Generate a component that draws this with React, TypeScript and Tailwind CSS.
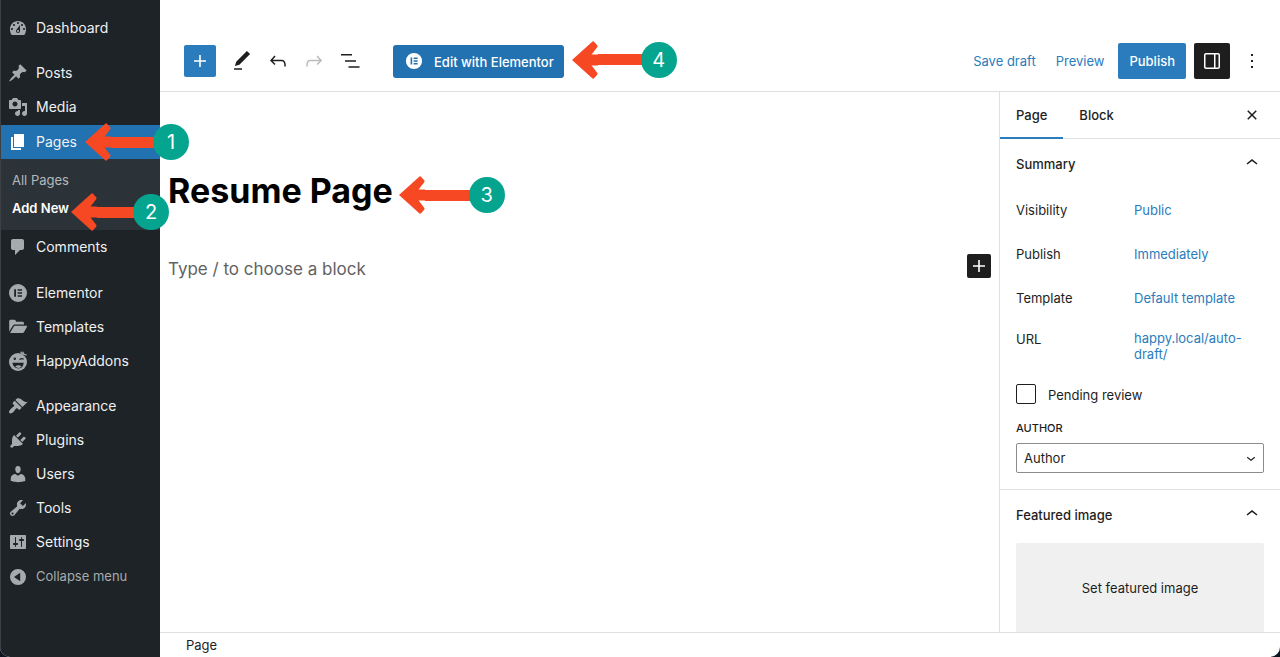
import type { ReactNode } from "react";

type IconProps = { d: string; size?: 18 | 20 | 24; box?: 20 | 24; className?: string };

const sizes = { 18: "size-[18px]", 20: "size-5", 24: "size-6" };

function Icon({ d, size = 24, box = 24, className = "" }: IconProps) {
  return (
    <svg viewBox={`0 0 ${box} ${box}`} className={`${sizes[size]} shrink-0 fill-current ${className}`} aria-hidden="true">
      <path fillRule="evenodd" d={d} />
    </svg>
  );
}

const icons = {
  dashboard:
    "M3.76 17h12.48c1.34-1.63 1.76-3.57 1.76-6 0-4.41-3.58-8-8-8s-8 3.59-8 8c0 2.43.42 4.37 1.76 6zM10 4c.55 0 1 .45 1 1s-.45 1-1 1-1-.45-1-1 .45-1 1-1zM6 6c.55 0 1 .45 1 1s-.45 1-1 1-1-.45-1-1 .45-1 1-1zm8 0c.55 0 1 .45 1 1s-.45 1-1 1-1-.45-1-1 .45-1 1-1zm-5.37 5.55L12 7v6c0 1.1-.9 2-2 2s-2-.9-2-2c0-.57.24-1.08.63-1.45zM4 10c.55 0 1 .45 1 1s-.45 1-1 1-1-.45-1-1 .45-1 1-1zm12 0c.55 0 1 .45 1 1s-.45 1-1 1-1-.45-1-1 .45-1 1-1zm-5 3c0-.55-.45-1-1-1s-1 .45-1 1 .45 1 1 1 1-.45 1-1z",
  posts:
    "M10.44 3.02l1.82-1.82 6.36 6.35-1.83 1.82c-1.05-.68-2.48-.57-3.41.36l-.75.75c-.92.93-1.04 2.35-.35 3.41l-1.83 1.82-2.41-2.41-2.8 2.79c-.42.42-3.38 2.71-3.8 2.29s1.86-3.39 2.28-3.81l2.79-2.79L4.1 9.36l1.83-1.82c1.05.69 2.48.57 3.4-.36l.75-.75c.93-.92 1.05-2.35.36-3.41z",
  media:
    "M13 11V4c0-.55-.45-1-1-1h-1.67L9 1H5L3.67 3H2c-.55 0-1 .45-1 1v7c0 .55.45 1 1 1h10c.55 0 1-.45 1-1zM7 4.5c1.38 0 2.5 1.12 2.5 2.5S8.38 9.5 7 9.5 4.5 8.38 4.5 7 5.62 4.5 7 4.5zM14 6h5v10.5c0 1.38-1.12 2.5-2.5 2.5S14 17.88 14 16.5s1.12-2.5 2.5-2.5c.17 0 .34.02.5.05V9h-3V6zm-4 8.05V13h2v3.5c0 1.38-1.12 2.5-2.5 2.5S7 17.88 7 16.5 8.12 14 9.5 14c.17 0 .34.02.5.05z",
  pages: "M6 15V2h10v13H6zm-1 1h8v2H3V5h2v11z",
  comments: "M5 2h9c1.1 0 2 .9 2 2v7c0 1.1-.9 2-2 2h-2l-5 5v-5H5c-1.1 0-2-.9-2-2V4c0-1.1.9-2 2-2z",
  elementor:
    "M10 1a9 9 0 1 0 0 18a9 9 0 0 0 0-18zM6.2 6.2H8v7.6H6.2zM9.6 6.2h4.4V7.8H9.6zM9.6 9.2h4.4v1.6H9.6zM9.6 12.2h4.4v1.6H9.6z",
  templates:
    "M1.2 14.5V4.2c0-.9.6-1.5 1.5-1.5h3.6c.6 0 1 .3 1.3.8l.6 1.2h6.3c.9 0 1.5.6 1.5 1.5v1.3H7c-1 0-1.700.4-2.200 1.200zM2 16l3.800-6.500c.3-.5.7-.7 1.300-.7h11.300c.6 0 .9.5.6 1l-2.900 5.200c-.4.700-.9 1-1.600 1z",
  appearance:
    "M14.48 11.06L7.41 3.99l1.5-1.5c.5-.56 2.3-.47 3.51.32 1.21.8 1.43 1.28 2.91 2.1 1.18.64 2.45 1.26 4.45.85zm-.71.71L6.7 4.7 4.93 6.47c-.39.39-.39 1.02 0 1.41l1.06 1.06c.39.39.39 1.03 0 1.42-.6.6-1.43 1.11-2.21 1.69-.35.26-.7.53-1.01.84C1.43 14.23.4 16.08 1.4 17.07c.99 1 2.84-.03 4.18-1.36.31-.31.58-.66.85-1.02.57-.78 1.08-1.61 1.69-2.21.39-.39 1.02-.39 1.41 0l1.06 1.06c.39.39 1.02.39 1.41 0z",
  plugins:
    "M13.11 4.36L9.87 7.6 8 5.73l3.24-3.24c.35-.34 1.05-.2 1.56.32.52.51.66 1.21.31 1.55zm-8 1.77l.91-1.12 9.01 9.01-1.19.84c-.71.71-2.63 1.16-3.82 1.16H6.14L4.9 17.26c-.59.59-1.54.59-2.12 0-.59-.58-.59-1.53 0-2.12l1.24-1.24v-3.88c0-1.13.4-3.19 1.09-3.89zm7.26 3.97l3.24-3.24c.34-.35 1.04-.21 1.55.31.52.51.66 1.21.31 1.55l-3.24 3.25z",
  users:
    "M10 9.25c-2.27 0-2.73-3.44-2.73-3.44C7 4.02 7.82 2 9.97 2c2.16 0 2.98 2.02 2.71 3.81 0 0-.41 3.44-2.68 3.44zm0 2.57L12.72 10c2.39 0 4.52 2.33 4.52 4.53v2.49s-3.65 1.13-7.24 1.13c-3.65 0-7.24-1.13-7.24-1.13v-2.49c0-2.25 1.94-4.48 4.47-4.48z",
  tools:
    "M16.68 9.77c-1.34 1.34-3.3 1.67-4.95.99l-5.41 6.52c-.99.99-2.59.99-3.58 0s-.99-2.59 0-3.57l6.52-5.42c-.68-1.65-.35-3.61.99-4.95 1.28-1.28 3.12-1.62 4.72-1.06l-2.89 2.89 2.82 2.82 2.86-2.87c.53 1.58.18 3.39-1.08 4.65zM3.81 16.21c.4.39 1.04.39 1.43 0 .4-.4.4-1.04 0-1.43-.39-.4-1.03-.4-1.43 0-.39.39-.39 1.03 0 1.43z",
  settings:
    "M18 16V4c0-.55-.45-1-1-1H3c-.55 0-1 .45-1 1v12c0 .55.45 1 1 1h14c.55 0 1-.45 1-1zM8 11h1c.55 0 1 .45 1 1s-.45 1-1 1H8v1.5c0 .28-.22.5-.5.5s-.5-.22-.5-.5V13H6c-.55 0-1-.45-1-1s.45-1 1-1h1V5.5c0-.28.22-.5.5-.5s.5.22.5.5V11zm5-2h-1c-.55 0-1-.45-1-1s.45-1 1-1h1V5.5c0-.28.22-.5.5-.5s.5.22.5.5V7h1c.55 0 1 .45 1 1s-.45 1-1 1h-1v5.5c0 .28-.22.5-.5.5s-.5-.22-.5-.5V9z",
  collapse: "M10 2a8 8 0 1 0 0 16a8 8 0 0 0 0-16zM12.2 5.800v8.400L6 10z",
  plus: "M18 11.2h-5.2V6h-1.6v5.2H6v1.6h5.2V18h1.6v-5.2H18z",
  pencil: "M20.1 5.1L16.9 2 6.2 12.7l-1.3 4.4 4.5-1.3L20.1 5.1zM4 20.8h8v-1.5H4v1.5z",
  undo: "M18.3 11.7c-.6-.6-1.4-.9-2.3-.9H6.7l2.9-3.3-1.1-1-4.5 5L8.5 16l1-1-2.7-2.7H16c.5 0 .9.2 1.3.5 1 1 1 3.4 1 4.5v.3h1.5v-.2c0-1.5 0-4.3-1.5-5.7z",
  redo: "M15.6 6.5l-1.1 1 2.9 3.3H8c-.9 0-1.7.3-2.3.9-1.4 1.5-1.4 4.2-1.4 5.6v.2h1.5v-.3c0-1.1 0-3.5 1-4.5.3-.3.7-.5 1.3-.5h9.2L14.5 15l1.1 1.1 4.6-4.6-4.6-5z",
  list: "M3 5h11v1.5H3zM7 11.200h11v1.500H7zM10.500 17.300h11v1.500h-11z",
  sidebar:
    "M18 4H6c-1.1 0-2 .9-2 2v12c0 1.1.9 2 2 2h12c1.1 0 2-.9 2-2V6c0-1.1-.9-2-2-2zm-4 14.5H6c-.3 0-.5-.2-.5-.5V6c0-.3.2-.5.5-.5h8v13zm4.5-.5c0 .3-.2.5-.5.5h-2.5v-13H18c.3 0 .5.2.5.5v12z",
  more: "M13 19h-2v-2h2v2zm0-6h-2v-2h2v2zm0-6h-2V5h2v2z",
  close:
    "M12 13.06l3.712 3.713 1.061-1.06L13.061 12l3.712-3.712-1.06-1.06L12 10.938 8.288 7.227l-1.061 1.06L10.939 12l-3.712 3.712 1.06 1.061L12 13.061z",
  up: "M6.5 12.4L12 8l5.5 4.400-.9 1.200L12 10l-4.500 3.600-1-1.200z",
  down: "M17.5 11.6L12 16l-5.5-4.400.9-1.200L12 14l4.500-3.600 1 1.200z",
};

function HappyIcon() {
  return (
    <svg viewBox="0 0 20 20" className="size-5 shrink-0" aria-hidden="true">
      <circle cx="10" cy="11" r="9" className="fill-[#a7aaad]" />
      <path d="M12.400 0l.8 3q2 1.800 5 1.700l1.800-.6V0z" className="fill-[#1d2327]" />
      <path d="M12.600.7q1 2.500 3 3.200M14.500.6q.8 2.800 4.200 3.600" className="fill-none stroke-[#a7aaad]" strokeWidth="1.2" />
      <circle cx="6.800" cy="7.800" r="1.200" className="fill-[#1d2327]" />
      <path d="M11.500 8.600q2-1.700 4.200-.3" className="fill-none stroke-[#1d2327]" strokeWidth="1.200" />
      <path d="M4.300 11.800h11.400q-.4 5.700-5.300 5.700t-6.100-5.700z" className="fill-[#1d2327]" />
      <path d="M7.200 15.600q2.800-2.400 6.400-.3-1.200 1.700-3.100 1.700t-3.300-1.400z" className="fill-[#a7aaad]" />
    </svg>
  );
}

/* Numbered step pointer: an arrow whose shaft stretches up to the badge. */
function Step({ n, className }: { n: number; className: string }) {
  return (
    <div className={`pointer-events-none absolute z-20 flex h-[38px] items-center ${className}`}>
      <svg viewBox="0 0 26 38" className="h-[38px] w-[26px] shrink-0 fill-[#f74824]" aria-hidden="true">
        <path d="M0 19L20.500.6q.8-.6 1.500.1l3.200 3.600q.6.700.2 1.600L19.600 13.500H26v11h-6.400l5.800 7.600q.4.900-.2 1.600l-3.200 3.600q-.7.700-1.500.1z" />
      </svg>
      <span className="-mr-1 h-[11px] flex-1 bg-[#f74824]" />
      <span className="flex size-9 shrink-0 items-center justify-center rounded-full bg-[#05a48f] text-xl font-normal text-white">
        {n}
      </span>
    </div>
  );
}

function MenuItem({ icon, label, active, children }: { icon: ReactNode; label: string; active?: boolean; children?: ReactNode }) {
  return (
    <li className={active ? "relative bg-[#2271b1] text-white" : "text-[#a7aaad]"}>
      <a href="#" className="flex h-[34px] items-center gap-2 pl-[7px]">
        {icon}
        <span className="text-sm text-[#f0f0f1]">{label}</span>
      </a>
      {children}
    </li>
  );
}

const dash = (name: keyof typeof icons) => <Icon d={icons[name]} size={20} box={20} />;

function AdminMenu() {
  return (
    <nav className="relative z-10 w-40 shrink-0 border-l border-[#3c4043] bg-[#1d2327] pt-[11px]">
      <ul>
        <MenuItem icon={dash("dashboard")} label="Dashboard" />
      </ul>
      <ul className="mt-[11px]">
        <MenuItem icon={dash("posts")} label="Posts" />
        <MenuItem icon={dash("media")} label="Media" />
      </ul>
      <ul className="mt-px">
        <MenuItem icon={dash("pages")} label="Pages" active>
          <Step n={1} className="-top-0.5 left-[84px] w-[104px]" />
        </MenuItem>
      </ul>
      <ul className="flex h-[71px] flex-col gap-2 bg-[#2c3338] pt-[11px] pl-[11px] text-[13px] leading-5">
        <li>
          <a href="#" className="text-[#b4b8bb]">All Pages</a>
        </li>
        <li className="relative">
          <a href="#" className="font-semibold text-white">Add New</a>
          <Step n={2} className="-top-[5px] left-[59px] w-[98px]" />
        </li>
      </ul>
      <ul>
        <MenuItem icon={dash("comments")} label="Comments" />
      </ul>
      <ul className="mt-3">
        <MenuItem icon={dash("elementor")} label="Elementor" />
        <MenuItem icon={dash("templates")} label="Templates" />
        <MenuItem icon={<HappyIcon />} label="HappyAddons" />
      </ul>
      <ul className="mt-[11px]">
        <MenuItem icon={dash("appearance")} label="Appearance" />
        <MenuItem icon={dash("plugins")} label="Plugins" />
        <MenuItem icon={dash("users")} label="Users" />
        <MenuItem icon={dash("tools")} label="Tools" />
        <MenuItem icon={dash("settings")} label="Settings" />
      </ul>
      <button className="mt-px flex h-[34px] items-center gap-2 pl-[7px] text-[13px] text-[#a7aaad]">
        {dash("collapse")}
        Collapse menu
      </button>
    </nav>
  );
}

function ToolButton({ label, d, className = "" }: { label: string; d: string; className?: string }) {
  return (
    <button aria-label={label} className={`flex size-9 items-center justify-center ${className}`}>
      <Icon d={d} />
    </button>
  );
}

function TopBar() {
  return (
    <header className="flex h-[92px] shrink-0 items-center justify-between border-b border-[#e0e0e0] pt-[31px] pr-[10px] pl-6">
      <div className="flex items-center">
        <button aria-label="Toggle block inserter" className="mr-2 flex size-8 items-center justify-center rounded-xs bg-[#2a7cbc] text-white">
          <Icon d={icons.plus} />
        </button>
        <ToolButton label="Tools" d={icons.pencil} />
        <ToolButton label="Undo" d={icons.undo} />
        <ToolButton label="Redo" d={icons.redo} className="text-[#bbb]" />
        <ToolButton label="List view" d={icons.list} />
        <div className="relative ml-[25px]">
          <button className="flex h-[33px] items-center gap-[11px] rounded-[3px] bg-[#2271b1] pr-[10px] pl-3 text-[13px] font-medium text-white">
            <Icon d={icons.elementor} size={18} box={20} />
            <span className="pt-[3px]">Edit with Elementor</span>
          </button>
          <Step n={4} className="-top-1 left-full ml-2 w-[105px]" />
        </div>
      </div>
      <div className="flex items-center text-[13px]">
        <button className="mr-5 pt-0.5 text-[#2a7cbc]">Save draft</button>
        <button className="mr-[14px] pt-0.5 text-[#2a7cbc]">Preview</button>
        <button className="mr-2 h-9 rounded-xs bg-[#2a7cbc] px-[11px] pt-0.5 font-medium text-white">Publish</button>
        <ToolButton label="Settings" d={icons.sidebar} className="mr-1 rounded-xs bg-[#1e1e1e] text-white" />
        <ToolButton label="Options" d={icons.more} />
      </div>
    </header>
  );
}

function Canvas() {
  return (
    <main className="min-w-0 flex-1 px-2 pt-[75px]">
      <div className="relative w-fit">
        <h1 className="text-[34px] leading-12 font-bold text-black">Resume Page</h1>
        <Step n={3} className="top-[9px] left-full ml-1.5 w-[106px]" />
      </div>
      <div className="mt-[34px] flex items-center">
        <input
          aria-label="Add default block"
          placeholder="Type / to choose a block"
          className="h-10 min-w-0 flex-1 text-[17px] outline-none placeholder:text-[#626262]"
        />
        <button aria-label="Add block" className="mb-1.5 flex size-6 items-center justify-center rounded-xs bg-[#1e1e1e] text-white">
          <Icon d={icons.plus} />
        </button>
      </div>
    </main>
  );
}

function PanelTitle({ children }: { children: string }) {
  return (
    <h2>
      <button className="flex h-12 w-full items-center justify-between px-4 font-medium">
        <span className="pt-[3px]">{children}</span>
        <Icon d={icons.up} />
      </button>
    </h2>
  );
}

function Row({ label, value }: { label: string; value: string }) {
  return (
    <div className="flex h-9 items-center">
      <span className="w-[118px]">{label}</span>
      <button className="text-[#2a7cbc]">{value}</button>
    </div>
  );
}

function SettingsPanel() {
  return (
    <aside className="flex w-[281px] shrink-0 flex-col overflow-hidden border-l border-[#e0e0e0] text-[13px]">
      <div className="flex h-[47px] shrink-0 items-stretch border-b border-[#e0e0e0] font-medium">
        <button className="-mb-px border-b-2 border-[#2a7cbc] px-4 pt-0.5">Page</button>
        <button className="px-4 pt-px">Block</button>
        <button aria-label="Close settings" className="ml-auto pr-4">
          <Icon d={icons.close} />
        </button>
      </div>
      <section className="shrink-0 border-b border-[#e0e0e0] pb-4">
        <PanelTitle>Summary</PanelTitle>
        <div className="flex flex-col gap-2 px-4 pt-1.5">
          <Row label="Visibility" value="Public" />
          <Row label="Publish" value="Immediately" />
          <Row label="Template" value="Default template" />
          <div className="mt-[5px] flex leading-4">
            <span className="w-[118px] pt-px">URL</span>
            <a href="#" className="w-[120px] text-[#2a7cbc]">happy.local/auto-draft/</a>
          </div>
        </div>
        <label className="mt-[22px] flex items-center gap-3 px-4">
          <input type="checkbox" className="size-5 appearance-none rounded-xs border border-[#1e1e1e]" />
          <span className="pt-0.5 leading-4">Pending review</span>
        </label>
        <div className="px-4 pt-4">
          <label htmlFor="author" className="block text-[11px] leading-4 font-medium uppercase">
            Author
          </label>
          <div className="relative mt-[7px]">
            <select id="author" className="h-[30px] w-full appearance-none rounded-xs border border-[#8c8c8c] bg-white pt-0.5 pl-[7px]">
              <option>Author</option>
            </select>
            <Icon d={icons.down} size={18} className="pointer-events-none absolute top-1.5 right-1" />
          </div>
        </div>
      </section>
      <section className="shrink-0">
        <PanelTitle>Featured image</PanelTitle>
        <div className="px-4 pt-[5px]">
          <button className="h-[92px] w-full rounded-xs bg-[#f0f0f0]">Set featured image</button>
        </div>
      </section>
    </aside>
  );
}

export default function App() {
  return (
    <div className="h-screen bg-[#0b1520] font-['Inter','Liberation_Sans',sans-serif] text-[#1e1e1e]">
      <div className="flex h-full overflow-hidden rounded-b-[10px] bg-white">
        <AdminMenu />
        <div className="flex min-w-0 flex-1 flex-col">
          <TopBar />
          <div className="flex min-h-0 flex-1">
            <Canvas />
            <SettingsPanel />
          </div>
          <footer className="flex h-[25px] shrink-0 items-center border-t border-[#e0e0e0] pt-0.5 pl-[26px] text-[13px]">Page</footer>
        </div>
      </div>
    </div>
  );
}
